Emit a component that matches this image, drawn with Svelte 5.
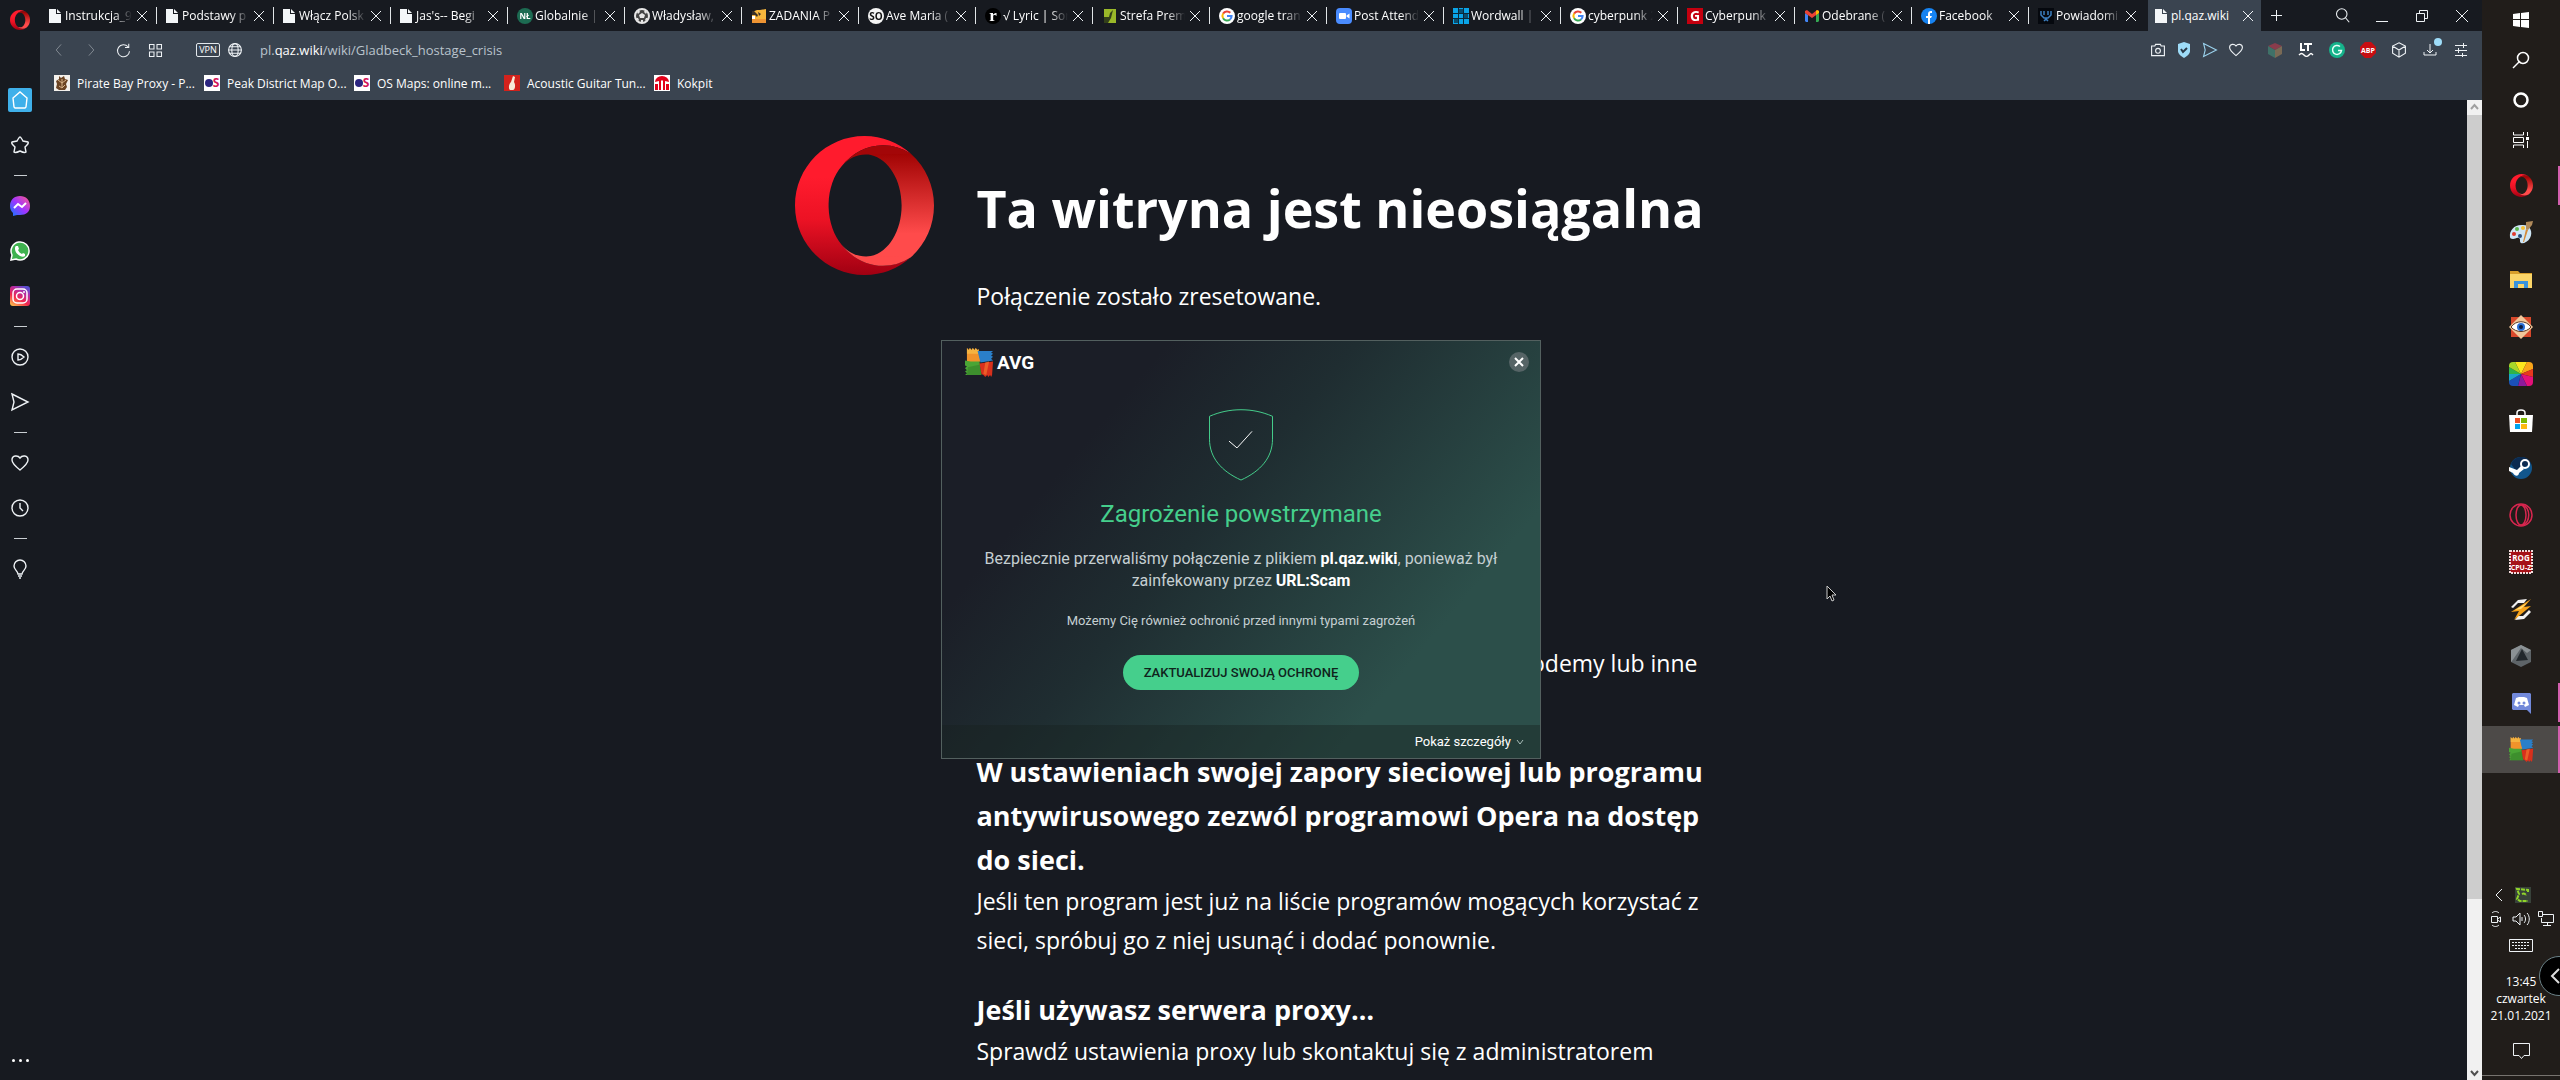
<script lang="ts">
    type Tab = { title: string; icon: string };

    const tabs: Tab[] = [
        { title: "Instrukcja_9", icon: "file" },
        { title: "Podstawy p", icon: "file" },
        { title: "Włącz Polsk", icon: "file" },
        { title: "Jas's-- Begi", icon: "file" },
        { title: "Globalnie |", icon: "nl" },
        { title: "Władysław,", icon: "ball" },
        { title: "ZADANIA P", icon: "tasks" },
        { title: "Ave Maria (", icon: "so" },
        { title: "√ Lyric | Sor", icon: "r" },
        { title: "Strefa Prem", icon: "strefa" },
        { title: "google tran", icon: "google" },
        { title: "Post Attend", icon: "zoom" },
        { title: "Wordwall | T", icon: "wordwall" },
        { title: "cyberpunk 2", icon: "google" },
        { title: "Cyberpunk", icon: "gol" },
        { title: "Odebrane (", icon: "gmail" },
        { title: "Facebook", icon: "facebook" },
        { title: "Powiadomi", icon: "bot" },
        { title: "pl.qaz.wiki", icon: "file" }
    ];
    let activeTab: number = tabs.length - 1;

    const bookmarks = [
        { title: "Pirate Bay Proxy - P...", icon: "pirate" },
        { title: "Peak District Map O...", icon: "os" },
        { title: "OS Maps: online m...", icon: "os" },
        { title: "Acoustic Guitar Tun...", icon: "guitar" },
        { title: "Kokpit", icon: "kokpit" }
    ];

    // "-" draws a separator line
    const sidebar = ["home", "star", "-", "messenger", "whatsapp", "instagram", "-", "play", "send", "-", "heart", "clock", "-", "bulb"];

    const pageActions = ["camera", "shield", "sendblue", "heart"];
    const extensions = ["cube", "lt", "grammarly", "abp", "box", "download", "sliders"];

    const systemButtons = ["windows", "search", "cortana", "taskview"];
    const apps = [
        { name: "opera", state: "open" },
        { name: "paint", state: "" },
        { name: "folder", state: "" },
        { name: "eye", state: "" },
        { name: "wheel", state: "" },
        { name: "store", state: "" },
        { name: "steam", state: "" },
        { name: "operagx", state: "" },
        { name: "cpuz", state: "" },
        { name: "winamp", state: "" },
        { name: "armoury", state: "" },
        { name: "discord", state: "open" },
        { name: "avg", state: "current" }
    ];

    let dialogOpen = true;
</script>

{#snippet opera(size: number)}
    <svg width={size} height={size} viewBox="0 0 24 24">
        <defs>
            <linearGradient id="opera-front" x1="0" y1="0" x2="0" y2="1">
                <stop offset="0.3" stop-color="#ff1b2d" />
                <stop offset="0.6" stop-color="#ec1224" />
                <stop offset="1" stop-color="#a00012" />
            </linearGradient>
            <linearGradient id="opera-back" x1="0" y1="0" x2="0" y2="1">
                <stop offset="0" stop-color="#9c0000" />
                <stop offset="0.75" stop-color="#ff4b4b" />
            </linearGradient>
        </defs>
        <path fill="url(#opera-front)" d="M8.05 5.24c-1.33 1.56-2.19 3.88-2.25 6.48v.56c.06 2.6.92 4.92 2.25 6.48 1.72 2.24 4.28 3.66 7.14 3.66 1.75 0 3.4-.54 4.8-1.47A11.96 11.96 0 0 1 12 24C5.37 24 0 18.63 0 12S5.37 0 12 0c3.07 0 5.87 1.16 8 3.06a8.65 8.65 0 0 0-4.81-1.48c-2.86 0-5.42 1.42-7.14 3.66z" />
        <path fill="url(#opera-back)" d="M24 12c0 3.56-1.55 6.75-4 8.95-3.08 1.5-5.95.45-6.9-.21 3.03-.66 5.31-4.32 5.31-8.74s-2.28-8.08-5.31-8.74c.95-.65 3.82-1.7 6.9-.2A11.96 11.96 0 0 1 24 12z" />
        <path fill="#a30608" d="M8.05 5.24C9.4 3.7 11 3 13.1 3.26l6.9-.2a8.65 8.65 0 0 0-4.81-1.48c-2.86 0-5.42 1.42-7.14 3.66z" />
        <path fill="#ff4b4b" d="M8.05 18.76C9.4 20.3 11 21 13.1 20.74l6.9.21a8.65 8.65 0 0 1-4.81 1.47c-2.86 0-5.42-1.42-7.14-3.66z" />
    </svg>
{/snippet}

{#snippet avg(size: number)}
    <svg width={size} height={size} viewBox="0 0 30 30">
        <path fill="#f0932b" d="M2 0l2 2 1-2 2 2 1-2 2 2 1-2 2 2 1-1 2 13-8 2-6-1z" />
        <path fill="#f7c04a" d="M2 0l2 2 1-2 2 2 1-2 2 2 1-2 2 2 1-1v5H2z" opacity=".7" />
        <path fill="#2a7fc9" d="M13 3l16 0-2 2 2 1-2 2 2 1-2 2 2 2-13 2z" />
        <path fill="#4aa535" d="M0 13l6 1 9 0 2 14H0l2-2-2-2 2-1-2-2 2-2-2-1z" />
        <path fill="#2f7a26" d="M3 20l13-3 1 11H2z" opacity=".5" />
        <path fill="#d8301c" d="M15 16l14-2-1 14-1 2-1-2-2 2-1-2-2 2-2-2-2-1z" />
        <path fill="#f06a2c" d="M21 15l4-1-3 14-3-1z" opacity=".8" />
    </svg>
{/snippet}

{#snippet favicon(name: string)}
    <svg class="favicon" width="16" height="16" viewBox="0 0 16 16">
        {#if name === "file"}
            <path fill="#f3f6f8" d="M0 1h7v5h5v9H0zM8 1l4 4H8z" />
        {:else if name === "nl"}
            <circle cx="8" cy="8" r="8" fill="#1d6b52" />
            <text x="8" y="11" text-anchor="middle" font-size="8" font-weight="700" fill="#fff">NŁ</text>
        {:else if name === "ball"}
            <circle cx="8" cy="8" r="7" fill="#444" stroke="#e6e6e6" stroke-width="2" />
            <path fill="#e6e6e6" d="M8 5l3 2-1 3H6L5 7zM3 4l2-2 1 2-2 2zM11 2l2 2-1 2-2-2zM2 10l2 0 1 2-1 1zM12 10h2l-2 3-1-1zM7 12h2v2H7z" />
        {:else if name === "tasks"}
            <path fill="#f5b53c" d="M1 4l5-2h3l6-1v14H1z" />
            <path fill="#e8732a" d="M1 11h14v4H1z" opacity=".5" />
            <path fill="#fff" d="M1 8h3v3H1z" />
            <path fill="#3a3026" d="M1 3h2l4 4-1 2-2-2H1zM7 4l3 2-2 2z" />
        {:else if name === "so"}
            <circle cx="8" cy="8" r="8" fill="#f4f4f4" />
            <text x="8" y="12" text-anchor="middle" font-size="10" font-weight="700" fill="#111">SO</text>
        {:else if name === "r"}
            <circle cx="8" cy="8" r="8" fill="#000" />
            <text class="serif" x="8" y="13" text-anchor="middle" font-size="17" font-weight="700" fill="#fff">r</text>
        {:else if name === "strefa"}
            <path fill="#9ab829" d="M2 1h12v14H2z" />
            <path fill="#33401a" d="M2 9h5l1-4 3-3-2 8-3 5H2z" />
        {:else if name === "google"}
            <circle cx="8" cy="8" r="8" fill="#fff" />
            <path fill="none" stroke="#ea4335" stroke-width="2" d="M4.1 5.6A4.6 4.6 0 0 1 11.3 4.8" />
            <path fill="none" stroke="#fbbc05" stroke-width="2" d="M4.1 10.3a4.6 4.6 0 0 1 0-4.7" />
            <path fill="none" stroke="#34a853" stroke-width="2" d="M11 11.5a4.6 4.6 0 0 1-6.9-1.2" />
            <path fill="none" stroke="#4285f4" stroke-width="2" d="M8 8h4.6a4.6 4.6 0 0 1-1.6 3.5" />
        {:else if name === "zoom"}
            <rect width="16" height="16" rx="4" fill="#4a8cff" />
            <rect x="3" y="5" width="7" height="6" rx="1" fill="#fff" />
            <path fill="#fff" d="M10.500 7.500l3-2v5l-3-2z" />
        {:else if name === "wordwall"}
            <path fill="#0aa5e8" d="M0 0h16v16H0z" />
            <path stroke="#0b2a3b" stroke-width="1" fill="none" d="M5.500 0v16M10.500 0v16M0 5.500h16M0 10.500h16" />
            <path fill="#0b2a3b" d="M6 1h4v4H6zM1 11h4v4H1zM11 6h4v4h-4z" opacity=".7" />
        {:else if name === "gol"}
            <path fill="#c4000f" d="M0 0h16v16H0z" />
            <text x="8" y="13" text-anchor="middle" font-size="14" font-weight="700" fill="#fff">G</text>
        {:else if name === "gmail"}
            <path fill="#4285f4" d="M1 5l3 2v7H2l-1-1z" />
            <path fill="#34a853" d="M12 7l3-2v8l-1 1h-2z" />
            <path fill="#ea4335" d="M1 3l2-1 5 4 5-4 2 1v2l-7 5-7-5z" />
            <path fill="#fbbc04" d="M12 3l1-1 2 1v2l-3 2z" />
        {:else if name === "facebook"}
            <circle cx="8" cy="8" r="8" fill="#1683f2" />
            <path fill="#fff" d="M7 16v-6H5V8h2V6c0-2 1-3 3-3h1v2h-1c-1 0-1 0-1 1v2h2l-1 2H9v6z" />
        {:else if name === "bot"}
            <path fill="#05080e" d="M0 0h16v16H0z" />
            <path fill="none" stroke="#3c7fc0" stroke-width="1.500" d="M3 3v4l3 3h4l3-3V3M6 3v4M10 3v4M6 13l2-2 2 2" />
        {:else if name === "pirate"}
            <path fill="#f4f1ec" d="M0 0h16v16H0z" />
            <path fill="#6b4423" d="M5 1l2 2 3-2 1 3 3 1-2 4 1 3-2 3H5l-3-2 1-4-1-3 3-2z" />
            <path fill="none" stroke="#d8b48a" d="M4 5l4 3 4-3M5 11l3 2 3-3M8 4v8" />
        {:else if name === "os"}
            <path fill="#fff" d="M0 0h16v16H0z" />
            <circle cx="5" cy="8" r="4" fill="#2b2580" />
            <text x="12" y="12" text-anchor="middle" font-size="12" font-weight="700" fill="#d4145a">S</text>
        {:else if name === "guitar"}
            <path fill="#d3221c" d="M0 0h16v16H0z" />
            <path fill="#f6ead8" d="M9 1l2 1-1 5c2 3 1 8-1 8H6c-2-2-1-6 1-8z" />
        {:else if name === "kokpit"}
            <path fill="#fff" d="M0 0h16v16H0z" />
            <path fill="#e2001a" d="M1 7a7 6 0 0 1 14 0l-4-1v9H9V6L8 5 7 6v9H5V6z" />
            <path fill="#e2001a" d="M1 9h3v6H1zM12 9h3v6h-3z" />
        {/if}
    </svg>
{/snippet}

{#snippet lineIcon(name: string, size: number)}
    <svg class="line icon" width={size} height={size} viewBox="0 0 20 20">
        {#if name === "home"}
            <path d="M3 8l7-6 7 6-1 9-1 1H5l-1-1z" stroke="#fff" />
        {:else if name === "star"}
            <path d="M10 2c1 0 1 1 3 4l5 1c1 1 0 2-3 5l1 5c-1 1-2 1-6-1-4 2-5 2-6 1l1-5C2 9 1 8 2 7l5-1c2-3 2-4 3-4z" />
        {:else if name === "play"}
            <circle cx="10" cy="10" r="8" />
            <path d="M8 7v6c3 0 5-2 6-3-1-1-3-3-6-3z" />
        {:else if name === "send" || name === "sendblue"}
            <path d="M2 2l16 8-16 8 2-8z" stroke={name === "sendblue" ? "#9bd3ee" : null} />
        {:else if name === "heart"}
            <path d="M10 17C5 13 2 10 2 7c0-5 6-5 8-2 2-3 8-3 8 2 0 3-3 6-8 10z" />
        {:else if name === "clock"}
            <circle cx="10" cy="10" r="8" />
            <path d="M10 5v5l3 3" />
        {:else if name === "bulb"}
            <path d="M8 15c0-3-4-4-4-8a6 6 0 0 1 12 0c0 4-4 5-4 8zM8 17h4M9 19h2" />
        {:else if name === "camera"}
            <path d="M2 5h4l1-2h6l1 2h4v12H2z" />
            <circle cx="10" cy="11" r="3" />
        {:else if name === "box"}
            <path d="M10 1l8 4v9l-8 5-8-5V5zM2 5l8 5 8-5M10 10v9" />
        {:else if name === "search"}
            <circle cx="9" cy="8" r="7" />
            <path d="M14 13l5 6" />
        {:else if name === "globe"}
            <circle cx="10" cy="10" r="8" />
            <ellipse cx="10" cy="10" rx="4" ry="8" />
            <path d="M2 10h16M3 6h14M3 14h14" />
        {:else if name === "grid"}
            <path d="M2 2h6v6H2zM12 2h6v6h-6zM2 12h6v6H2zM12 12h6v6h-6z" />
        {:else if name === "reload"}
            <path d="M16 5a8 8 0 1 0 2 6M17 1v5h-5" />
        {:else if name === "back"}
            <path d="M13 2l-7 8 7 8" />
        {:else if name === "forward"}
            <path d="M7 2l7 8-7 8" />
        {/if}
    </svg>
{/snippet}

{#snippet extension(name: string)}
    {#if name === "shield"}
        <svg width="16" height="16" viewBox="0 0 16 16">
            <path fill="#9edcf8" d="M8 0l6 2v7c0 3-3 5-6 7-3-2-6-4-6-7V2z" />
            <path fill="none" stroke="#2a3a48" stroke-width="2" d="M5 7l2 3 4-4" />
        </svg>
    {:else if name === "cube"}
        <svg width="16" height="16" viewBox="0 0 16 16">
            <path fill="#8a3c4c" d="M8 1l7 3-7 4-7-4z" />
            <path fill="#3f7168" d="M1 4l7 4v8l-7-4z" />
            <path fill="#7a6a55" d="M15 4L8 8v8l7-4z" />
        </svg>
    {:else if name === "lt"}
        <svg width="16" height="16" viewBox="0 0 16 16">
            <path fill="none" stroke="#fff" stroke-width="2" d="M3 1v7h4M6 2h8M10 2v7" />
            <path fill="none" stroke="#fff" stroke-width="1.500" d="M1 13c2-2 3-2 5 0s3 2 5 0 2-2 4 0" />
        </svg>
    {:else if name === "grammarly"}
        <svg width="16" height="16" viewBox="0 0 16 16">
            <circle cx="8" cy="8" r="8" fill="#15b38b" />
            <path fill="none" stroke="#e8fff8" stroke-width="1.500" d="M11 4.500a4.500 4.500 0 1 0 1.500 4H9" />
        </svg>
    {:else if name === "abp"}
        <svg width="16" height="16" viewBox="0 0 16 16">
            <path fill="#c70d12" d="M5 0h6l5 5v6l-5 5H5l-5-5V5z" />
            <text x="8" y="11" text-anchor="middle" font-size="7" font-weight="700" fill="#fff">ABP</text>
        </svg>
    {:else if name === "download"}
        <svg class="line download" width="16" height="24" viewBox="0 0 16 24">
            <path d="M8 8v9M5 14l3 3 3-3M2 16v3h12v-3" />
            <circle cx="16" cy="6" r="4" fill="#9edcf8" stroke="none" />
        </svg>
    {:else if name === "sliders"}
        <svg class="line" width="14" height="14" viewBox="0 0 14 14">
            <path d="M1 2.500h12M1 7.500h12M1 12.500h12M9.500 0v5M4.500 5v5M8.500 10v4" />
        </svg>
    {:else}
        {@render lineIcon(name, 16)}
    {/if}
{/snippet}

{#snippet sideIcon(name: string)}
    {#if name === "messenger"}
        <svg width="20" height="20" viewBox="0 0 20 20">
            <defs>
                <linearGradient id="msg" x1="0" y1="1" x2="1" y2="0">
                    <stop offset="0" stop-color="#0a7cff" />
                    <stop offset="0.5" stop-color="#a033ff" />
                    <stop offset="1" stop-color="#ff5c87" />
                </linearGradient>
            </defs>
            <path fill="url(#msg)" d="M10 0c6 0 10 4 10 10s-4 9-10 9l-3 0-4 1v-3C1 15 0 13 0 10 0 4 4 0 10 0z" />
            <path fill="none" stroke="#fff" stroke-width="2" d="M4 12l4-4 4 3 4-4" />
        </svg>
    {:else if name === "whatsapp"}
        <svg width="20" height="20" viewBox="0 0 20 20">
            <path fill="#3fb24f" stroke="#fff" stroke-width="1.500" d="M1 19l1-5a9 9 0 1 1 4 4z" />
            <path fill="#fff" d="M6 5h2l1 3-1 1c1 2 2 3 4 4l1-1 2 1v2c-1 1-3 1-5 0-3-2-5-4-5-7 0-2 0-2 1-3z" />
        </svg>
    {:else if name === "instagram"}
        <svg width="20" height="20" viewBox="0 0 20 20">
            <defs>
                <linearGradient id="insta" x1="0.1" y1="1" x2="0.7" y2="0">
                    <stop offset="0" stop-color="#fdc24c" />
                    <stop offset="0.4" stop-color="#f2274c" />
                    <stop offset="0.75" stop-color="#b42da6" />
                    <stop offset="1" stop-color="#5a4fd0" />
                </linearGradient>
            </defs>
            <rect width="20" height="20" rx="3" fill="url(#insta)" />
            <rect x="3" y="3" width="14" height="14" rx="4" fill="none" stroke="#fff" stroke-width="1.500" />
            <circle cx="10" cy="10" r="3.500" fill="none" stroke="#fff" stroke-width="1.500" />
            <circle cx="14" cy="6" r="1" fill="#fff" />
        </svg>
    {:else}
        {@render lineIcon(name, 20)}
    {/if}
{/snippet}

{#snippet appIcon(name: string)}
    {#if name === "opera"}
        {@render opera(23)}
    {:else if name === "avg"}
        {@render avg(25)}
    {:else}
        <svg width="24" height="24" viewBox="0 0 24 24">
            {#if name === "windows"}
                <path fill="#fff" d="M4 6l7-1v6H4zM12 5l8-1v7h-8zM4 12h7v7l-7-1zM12 12h8v8l-8-1z" />
            {:else if name === "search"}
                <path fill="none" stroke="#fff" stroke-width="1.500" d="M4 20l7-7" />
                <circle cx="14" cy="10" r="5.500" fill="none" stroke="#fff" stroke-width="1.500" />
            {:else if name === "cortana"}
                <circle cx="12" cy="12" r="6.500" fill="none" stroke="#fff" stroke-width="2.500" />
            {:else if name === "taskview"}
                <path fill="none" stroke="#fff" d="M4.500 4v3h10V4M4.500 20v-3h10v3M4.500 9.500h10v5h-10zM18.500 4v4M18.500 13v7" />
                <path fill="#fff" d="M17 9h3v3h-3z" />
            {:else if name === "paint"}
                <path fill="#cfe6f5" d="M1 16C0 9 6 3 14 4c8 0 10 8 7 13-2 4-7 6-9 5s0-4-2-5-4 1-6 1-3-1-3-2z" />
                <circle cx="5" cy="13" r="2" fill="#e03a2e" />
                <circle cx="8" cy="8" r="2" fill="#5bb54a" />
                <circle cx="14" cy="7" r="2" fill="#f5c035" />
                <circle cx="11" cy="15" r="2" fill="#274b7d" />
                <path fill="#d58b3a" d="M14 21l3-13 2 1-4 12z" />
                <path fill="#b08a5a" d="M17 1l7-1-1 4-4 5-2-1z" />
            {:else if name === "folder"}
                <path fill="#d99f2b" d="M1 3h8l2 2h12v4H1z" />
                <path fill="#fbd568" d="M1 6h22v14H1z" />
                <path fill="#3a93dc" d="M5 20v-7h14v7h-4v-4H9v4z" />
            {:else if name === "eye"}
                <path fill="#d8492b" d="M2 2h20v20H2z" />
                <path fill="#f1c79a" d="M12 0l12 12-12 12L0 12z" />
                <path fill="#fff" stroke="#5a3420" d="M2 12c5-7 15-7 20 0-5 6-15 6-20 0z" />
                <circle cx="12" cy="12" r="4" fill="#2a6fd6" />
                <circle cx="12" cy="12" r="2" fill="#0c1d3f" />
            {:else if name === "wheel"}
                <clipPath id="wheel-clip"><rect width="24" height="24" rx="4" /></clipPath>
                <g clip-path="url(#wheel-clip)">
                    <path fill="#fbe51e" d="M12 12L6 0h12z" />
                    <path fill="#f9a51a" d="M12 12l6-12h6v7z" />
                    <path fill="#e8381f" d="M12 12l12-5v8z" />
                    <path fill="#e5117a" d="M12 12l12 3v9h-6z" />
                    <path fill="#8d1a9c" d="M12 12l6 12H9z" />
                    <path fill="#1b50b8" d="M12 12L9 24H0v-5z" />
                    <path fill="#1aa6c9" d="M12 12L0 19v-7z" />
                    <path fill="#2eb34a" d="M12 12H0V5z" />
                    <path fill="#a8d62a" d="M12 12L0 5V0h6z" />
                </g>
            {:else if name === "store"}
                <path fill="none" stroke="#fff" stroke-width="1.500" d="M8 6V4c0-4 8-4 8 0v2" />
                <path fill="#fff" d="M0 6h24l-1 17H1z" />
                <path fill="#f05022" d="M6 9h5v5H6z" />
                <path fill="#7db902" d="M12 9h6v5h-6z" />
                <path fill="#00a3ee" d="M6 15h5v5H6z" />
                <path fill="#fdb813" d="M12 15h6v5h-6z" />
            {:else if name === "steam"}
                <circle cx="12" cy="12" r="11" fill="#12568c" />
                <path fill="#0b2a50" d="M2 8a11 11 0 0 1 20-1L8 16z" />
                <circle cx="16" cy="8" r="4" fill="none" stroke="#fff" stroke-width="2" />
                <path fill="#fff" d="M0 11l8 3 4-4 3 3-5 4c0 3-4 4-6 0l-4-2z" />
            {:else if name === "operagx"}
                <circle cx="12" cy="12" r="11" fill="none" stroke="#d8264f" stroke-width="1.500" />
                <ellipse cx="12" cy="12" rx="5" ry="10" fill="none" stroke="#d8264f" stroke-width="1.500" />
                <path fill="none" stroke="#d8264f" stroke-width="1.500" d="M13 2c9 1 9 19 0 20" />
            {:else if name === "cpuz"}
                <rect x="1" y="1" width="22" height="22" fill="#a61218" />
                <rect x="1" y="1" width="22" height="22" fill="none" stroke="#f4dcdc" stroke-width="2" stroke-dasharray="2 1" />
                <text x="12" y="11" text-anchor="middle" font-size="8" font-weight="700" fill="#fff">ROG</text>
                <text x="12" y="20" text-anchor="middle" font-size="7" font-weight="700" fill="#fff">CPU-Z</text>
            {:else if name === "winamp"}
                <path fill="#f2f2f2" d="M9 3l9-1-3 4H9l-5 5-2-1zM15 22l-9 1 3-4h5l6-6 2 2z" />
                <path fill="#f5a21b" d="M22 2L2 15l8-1-5 9 17-14-7 1z" />
                <path fill="#ffdc7a" d="M18 6L6 13l6-1z" />
            {:else if name === "armoury"}
                <path fill="#5e6468" d="M12 1l10 5v12l-10 5-10-5V6z" />
                <path fill="#8b9194" d="M12 1l10 5-4 3-6-5-9 13-1 1V6z" />
                <path fill="#22272b" d="M13 5l6 11-12 1z" />
            {:else if name === "discord"}
                <path fill="#7289da" d="M4 2h17l1 1v20l-4-4H4l-1-1V3z" />
                <path fill="#fff" d="M7 7l3-1h5l3 1 2 7-4 2-1-2h-5l-1 2-4-2z" />
                <circle cx="10" cy="12" r="1.500" fill="#7289da" />
                <circle cx="15" cy="12" r="1.500" fill="#7289da" />
            {/if}
        </svg>
    {/if}
{/snippet}

<div class="screen">
    <div class="workspace">
        <nav class="sidebar" aria-label="Pasek boczny">
            <button class="menu" aria-label="Menu">{@render opera(20)}</button>
            {#each sidebar as item}
                {#if item === "-"}
                    <div class="separator"></div>
                {:else}
                    <button class="side-item" class:current={item === "home"} aria-label={item}>
                        <span>{@render sideIcon(item)}</span>
                    </button>
                {/if}
            {/each}
            <button class="more" aria-label="Więcej"><i></i><i></i><i></i></button>
        </nav>

        <div class="browser">
            <div class="tab-bar">
                <div class="tabs">
                    {#each tabs as tab, i}
                        <div class="tab" class:active={i === activeTab} class:last={i === activeTab - 1}>
                            <button class="tab-title" on:click={() => (activeTab = i)}>
                                {@render favicon(tab.icon)}
                                <span class:short={tab.icon === "file"}>{tab.title}</span>
                            </button>
                            <button class="tab-close" aria-label="Zamknij kartę">
                                <svg class="line" width="10" height="10" viewBox="0 0 10 10"><path d="M0 0l10 10M10 0L0 10" /></svg>
                            </button>
                        </div>
                    {/each}
                </div>
                <button class="new-tab" aria-label="Nowa karta">
                    <svg class="line" width="11" height="11" viewBox="0 0 11 11"><path d="M5.500 0v11M0 5.500h11" /></svg>
                </button>
                <div class="window-buttons">
                    <button aria-label="Szukaj">{@render lineIcon("search", 15)}</button>
                    <button aria-label="Minimalizuj">
                        <svg class="line" width="12" height="12" viewBox="0 0 12 12"><path d="M0 11.500h12" /></svg>
                    </button>
                    <button aria-label="Przywróć">
                        <svg class="line" width="12" height="12" viewBox="0 0 12 12"><path d="M.5 3.500h8v8h-8zM3.500 3.500v-3h8v8h-3" /></svg>
                    </button>
                    <button aria-label="Zamknij">
                        <svg class="line" width="12" height="12" viewBox="0 0 12 12"><path d="M0 0l12 12M12 0L0 12" /></svg>
                    </button>
                </div>
            </div>

            <div class="toolbar">
                <div class="nav-buttons">
                    <button class="dim" aria-label="Wstecz">{@render lineIcon("back", 14)}</button>
                    <button class="dim" aria-label="Dalej">{@render lineIcon("forward", 14)}</button>
                    <button aria-label="Odśwież">{@render lineIcon("reload", 15)}</button>
                    <button aria-label="Speed Dial">{@render lineIcon("grid", 15)}</button>
                </div>
                <button class="vpn">VPN</button>
                {@render lineIcon("globe", 16)}
                <a class="url" href="#top">pl.<b>qaz.wiki</b>/wiki/Gladbeck_hostage_crisis</a>
                <div class="actions">
                    {#each pageActions as name}
                        <button aria-label={name}>{@render extension(name)}</button>
                    {/each}
                </div>
                <div class="extensions">
                    {#each extensions as name}
                        <button aria-label={name}>{@render extension(name)}</button>
                    {/each}
                </div>
            </div>

            <div class="bookmarks">
                {#each bookmarks as bookmark}
                    <a href="#top">{@render favicon(bookmark.icon)}{bookmark.title}</a>
                {/each}
            </div>

            <div class="page">
                <main>
                    <div class="error">
                        {@render opera(139)}
                        <div class="message">
                            <h1>Ta witryna jest nieosiągalna</h1>
                            <p>Połączenie zostało zresetowane.</p>
                            <p class="hardware">modemy lub inne</p>
                            <h2>
                                W ustawieniach swojej zapory sieciowej lub programu<br />
                                antywirusowego zezwól programowi Opera na dostęp<br />
                                do sieci.
                            </h2>
                            <p>
                                Jeśli ten program jest już na liście programów mogących korzystać z<br />
                                sieci, spróbuj go z niej usunąć i dodać ponownie.
                            </p>
                            <h2>Jeśli używasz serwera proxy…</h2>
                            <p>Sprawdź ustawienia proxy lub skontaktuj się z administratorem</p>
                        </div>
                    </div>
                </main>
                <div class="scrollbar">
                    <svg width="15" height="15" viewBox="0 0 15 15"><path fill="none" stroke="#a0a0a0" stroke-width="2" d="M4 9l3.500-4L11 9" /></svg>
                    <div class="track"><div class="thumb"></div></div>
                    <svg width="15" height="15" viewBox="0 0 15 15"><path fill="none" stroke="#505050" stroke-width="2" d="M4 6l3.500 4L11 6" /></svg>
                </div>
            </div>
        </div>

        {#if dialogOpen}
            <div class="dialog" role="dialog" aria-label="AVG">
                <header>
                    {@render avg(29)}
                    <strong>AVG</strong>
                    <button aria-label="Zamknij" on:click={() => (dialogOpen = false)}>
                        <svg width="10" height="10" viewBox="0 0 10 10"><path stroke="#fff" stroke-width="2" d="M1 1l8 8M9 1L1 9" /></svg>
                    </button>
                </header>
                <div class="dialog-body">
                    <svg width="64" height="72" viewBox="0 0 64 74" preserveAspectRatio="none" fill="none">
                        <path stroke="#45cf8c" d="M.5 7.500c20-9 43-9 63 0V31c0 19-12 33-31.500 42C12.500 64 .5 50 .5 31z" />
                        <path stroke="#fff" d="M20 33l8 7 15-17" />
                    </svg>
                    <h3>Zagrożenie powstrzymane</h3>
                    <p>Bezpiecznie przerwaliśmy połączenie z plikiem <b>pl.qaz.wiki</b>, ponieważ był zainfekowany przez <b>URL:Scam</b></p>
                    <small>Możemy Cię również ochronić przed innymi typami zagrożeń</small>
                    <button class="upgrade">ZAKTUALIZUJ SWOJĄ OCHRONĘ</button>
                </div>
                <footer>
                    <button>
                        Pokaż szczegóły
                        <svg width="8" height="8" viewBox="0 0 8 8"><path fill="none" stroke="#a9bdb8" d="M1 2l3 4 3-4" /></svg>
                    </button>
                </footer>
            </div>
        {/if}

        <svg class="pointer" width="12" height="18" viewBox="0 0 12 18"><path fill="#000" stroke="#ccc" d="M1 1v13l3-3 2 5 2-1-2-5h4z" /></svg>
    </div>

    <aside class="taskbar">
        <div class="system">
            {#each systemButtons as name}
                <button aria-label={name}>{@render appIcon(name)}</button>
            {/each}
        </div>
        {#each apps as app}
            <button class="app {app.state}" aria-label={app.name}>{@render appIcon(app.name)}</button>
        {/each}
        <div class="tray">
            <div class="tray-row top">
                <svg class="line" width="8" height="14" viewBox="0 0 8 14"><path d="M7 1L1 7l6 6" /></svg>
                <svg width="16" height="16" viewBox="0 0 16 16">
                    <path fill="#38423a" d="M0 0h16v16H0z" />
                    <path fill="none" stroke="#8fd42a" stroke-width="2" stroke-dasharray="4 1" d="M13 5V3L2 2l2 5-2 5 3 2h8M7 7c2-1 4 0 4 2" />
                </svg>
            </div>
            <div class="tray-row">
                <svg class="line" width="16" height="16" viewBox="0 0 16 16"><path d="M3.500 5.500h6v6h-6zM9.500 8l3-2v5l-3-2M4 2c2-2 5-2 7 0M4 14c2 2 5 2 7 0" /></svg>
                <svg class="line" width="18" height="16" viewBox="0 0 18 16"><path d="M1 6h3l4-4v12l-4-4H1zM10 6v4M12 4c2 2 2 6 0 8M15 2c3 3 3 9 0 12" /></svg>
                <svg class="line" width="16" height="16" viewBox="0 0 16 16"><path d="M5 3.500h10.500v8H3.500V7M.5.500h4v5h-4zM9.500 12v3M5 14.500h8" /></svg>
            </div>
            <svg class="line" width="24" height="14" viewBox="0 0 24 14"><path d="M.5.500h23v12H.5z" /><path stroke-dasharray="2 1" d="M3 3.500h18M3 6.500h18M6 9.500h12" /></svg>
            <div class="clock">
                <time>13:45</time>
                <span>czwartek</span>
                <span>21.01.2021</span>
            </div>
            <svg class="line" width="17" height="16" viewBox="0 0 17 16"><path d="M.5.500h16v12H11l-2.500 3-2.500-3H.5z" /></svg>
        </div>
        <button class="bubble" aria-label="Rozwiń">
            <svg width="10" height="16" viewBox="0 0 10 16"><path fill="none" stroke="#ddd" stroke-width="2" d="M9 1L2 8l7 7" /></svg>
        </button>
    </aside>
</div>

<style>
    :global(body) {
        margin: 0;
        background: #171a21;
    }
    .screen {
        display: grid;
        grid-template-columns: minmax(0, 1fr) 78px;
        height: 100vh;
        overflow: hidden;
        font-family: "Open Sans", "Noto Sans", sans-serif;
        font-size: 12px;
        color: #fff;
    }
    button {
        display: flex;
        align-items: center;
        justify-content: center;
        margin: 0;
        padding: 0;
        border: 0;
        background: none;
        color: inherit;
        font: inherit;
    }
    a {
        color: inherit;
        text-decoration: none;
    }
    svg {
        flex: none;
        display: block;
        overflow: visible;
    }
    .line {
        fill: none;
        stroke: #eef2f5;
    }
    .icon {
        stroke-width: 1.4;
    }
    .serif {
        font-family: "Liberation Serif", serif;
    }

    .workspace {
        position: relative;
        display: grid;
        grid-template-columns: 40px minmax(0, 1fr);
        min-height: 0;
    }

    /* left rail */
    .sidebar {
        display: flex;
        flex-direction: column;
        align-items: center;
        background: #171a20;
    }
    .menu {
        width: 40px;
        height: 40px;
        margin-bottom: 37px;
    }
    .side-item {
        width: 40px;
        height: 45px;
    }
    .side-item span {
        display: flex;
        align-items: center;
        justify-content: center;
        width: 24px;
        height: 24px;
        border-radius: 2px;
    }
    .side-item.current span {
        background: #3fb0ea;
    }
    .separator {
        width: 13px;
        height: 1px;
        margin: 8px 0 7px;
        background: #c9ced2;
    }
    .more {
        gap: 4px;
        margin-top: auto;
        height: 40px;
    }
    .more i {
        width: 3px;
        height: 3px;
        border-radius: 50%;
        background: #fff;
    }

    .browser {
        display: flex;
        flex-direction: column;
        min-height: 0;
        min-width: 0;
    }
    .tab-bar {
        display: flex;
        height: 31px;
        background: #171a20;
    }
    .tabs {
        display: flex;
    }
    .tab {
        display: flex;
        align-items: center;
        position: relative;
        width: 117px;
        box-sizing: border-box;
        padding-left: 9px;
    }
    /* thin rule between inactive tabs */
    .tab::after {
        content: "";
        position: absolute;
        right: 0;
        top: 7px;
        width: 1px;
        height: 17px;
        background: #e1e5e8;
    }
    .tab.active::after, .tab.last::after {
        display: none;
    }
    .tab.last {
        margin-right: 2px;
    }
    .tab.active {
        width: 113px;
        padding-left: 7px;
        background: #3a4450;
    }
    .tab-title {
        justify-content: flex-start;
        gap: 2px;
        width: 83px;
        white-space: nowrap;
        mask-image: linear-gradient(90deg, #000 78%, transparent 100%);
    }
    .tab-title .short {
        margin-left: -2px;
    }
    .tab.active .tab-title {
        mask-image: none;
    }
    .tab-close {
        width: 20px;
        height: 31px;
    }
    .new-tab {
        width: 30px;
    }
    .window-buttons {
        display: flex;
        margin-left: auto;
    }
    .window-buttons button {
        width: 40px;
    }

    .toolbar {
        display: flex;
        align-items: center;
        height: 38px;
        padding: 0 6px 0 3px;
        background: #3a4450;
    }
    .nav-buttons, .actions, .extensions {
        display: flex;
    }
    .nav-buttons button {
        width: 32px;
        height: 32px;
    }
    .dim {
        opacity: 0.4;
    }
    .vpn {
        width: 24px;
        height: 14px;
        margin: 0 7px 0 25px;
        border: 1px solid #e3e8ec;
        box-sizing: border-box;
        border-radius: 2px;
        font-size: 9px;
        line-height: 12px;
    }
    .url {
        margin-left: 17px;
        color: #b9c3cc;
        font-size: 13px;
    }
    .url b {
        color: #fff;
        font-weight: 400;
    }
    .actions {
        margin-left: auto;
    }
    .actions button {
        width: 26px;
    }
    .extensions {
        margin-left: 10px;
    }
    .extensions button {
        width: 31px;
    }
    .download {
        margin-bottom: 4px;
    }
    .bookmarks {
        display: flex;
        height: 31px;
        padding-left: 14px;
        background: #3a4450;
    }
    .bookmarks a {
        display: flex;
        align-items: center;
        gap: 7px;
        width: 150px;
        padding-bottom: 3px;
        white-space: nowrap;
    }

    /* error page */
    .page {
        display: flex;
        flex: 1;
        min-height: 0;
    }
    main {
        flex: 1;
        overflow: hidden;
        background: #171a21;
    }
    .error {
        display: flex;
        gap: 43px;
        width: 918px;
        margin: 0 auto;
        padding-top: 36px;
        white-space: nowrap;
    }
    .message {
        flex: 1;
        min-width: 0;
        font-size: 23px;
        line-height: 39px;
    }
    h1 {
        margin: 37px 0 34px;
        font-size: 52px;
        line-height: 70px;
    }
    h2 {
        margin: 28px 0 0;
        font-size: 27px;
        line-height: 44px;
    }
    .message p {
        margin: 0;
    }
    .message .hardware {
        margin: 328px 15px 0 0;
        padding-bottom: 39px;
        text-align: right;
    }
    .scrollbar {
        display: flex;
        flex-direction: column;
        width: 15px;
        background: #f1f1f1;
    }
    .track {
        flex: 1;
    }
    .thumb {
        height: 82.5%;
        background: #cdcdcd;
    }

    /* antivirus alert, floats over the browser */
    .dialog {
        position: absolute;
        top: 340px;
        left: calc(50% - 300px);
        display: flex;
        flex-direction: column;
        width: 600px;
        height: 419px;
        box-sizing: border-box;
        border: 1px solid #53605f;
        background: linear-gradient(130deg, #1b1e27 24%, #1f2d31 44%, #2c4f4a 78%, #2c4f4a 100%);
        font-family: Roboto, sans-serif;
    }
    .dialog header {
        display: flex;
        align-items: center;
        gap: 3px;
        height: 42px;
        padding: 0 11px 0 23px;
    }
    .dialog strong {
        font-size: 19px;
    }
    .dialog header button {
        width: 20px;
        height: 20px;
        margin-left: auto;
        border-radius: 50%;
        background: #566466;
    }
    .dialog-body {
        display: flex;
        flex: 1;
        flex-direction: column;
        align-items: center;
        padding-top: 26px;
    }
    h3 {
        margin: 17px 0 18px;
        color: #45cf8c;
        font-size: 24px;
        font-weight: 400;
        line-height: 32px;
    }
    .dialog p {
        width: 540px;
        margin: 0 0 19px;
        color: #c5cfd2;
        font-size: 16px;
        line-height: 22px;
        text-align: center;
    }
    .dialog p b {
        color: #fff;
    }
    small {
        color: #c5cfd2;
        font-size: 13px;
        line-height: 20px;
    }
    .upgrade {
        width: 236px;
        height: 35px;
        margin-top: 24px;
        border-radius: 18px;
        background: #45cf8c;
        color: #10231c;
        font-size: 13px;
        font-weight: 500;
    }
    .dialog footer {
        display: flex;
        justify-content: flex-end;
        height: 33px;
        padding-right: 16px;
        background: rgba(22, 32, 30, 0.4);
    }
    .dialog footer button {
        gap: 5px;
        font-size: 13px;
    }
    .pointer {
        position: absolute;
        top: 585px;
        left: 1826px;
    }

    /* vertical Windows taskbar */
    .taskbar {
        position: relative;
        display: flex;
        flex-direction: column;
        overflow: hidden;
        background: #211d1a;
    }
    .system {
        margin-bottom: 2px;
    }
    .system button {
        width: 100%;
        height: 40px;
    }
    .app {
        height: 47px;
    }
    .app.open, .app.current {
        border-right: 2px solid #d35fae;
        padding-left: 2px;
    }
    .app.open {
        height: 39px;
        margin: 4px 0;
    }
    .app.current {
        background: #4d4a48;
    }
    .tray {
        display: flex;
        flex-direction: column;
        align-items: center;
        margin-top: auto;
        height: 192px;
        border-bottom: 1px solid #77736f;
        margin-bottom: 4px;
    }
    .tray-row {
        display: flex;
        align-items: center;
        gap: 8px;
        height: 24px;
        margin-bottom: 8px;
    }
    .tray-row.top {
        gap: 12px;
        margin: 0 16px 0 0;
    }
    .clock {
        display: flex;
        flex-direction: column;
        align-items: center;
        margin: 20px 0 19px;
        line-height: 17px;
    }
    .bubble {
        position: absolute;
        top: 956px;
        right: -19px;
        width: 40px;
        height: 40px;
        box-sizing: border-box;
        padding-right: 8px;
        border: 1px solid #6b8288;
        border-radius: 50%;
        background: #000;
    }
</style>
